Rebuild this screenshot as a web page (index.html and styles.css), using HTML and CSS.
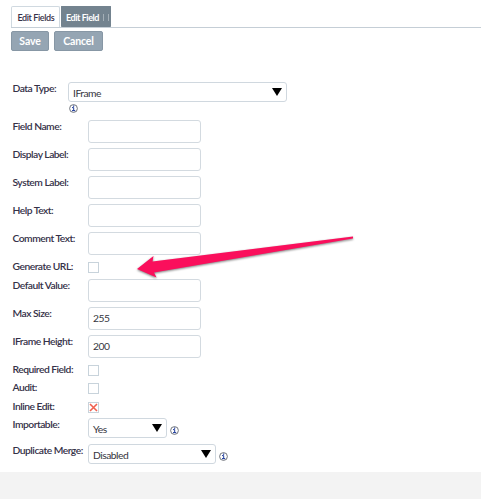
FILE: index.html
```html
<!DOCTYPE html>
<html lang="en">
<head>
<meta charset="utf-8">
<title>Edit Field</title>
<link rel="stylesheet" href="styles.css">
</head>
<body>
<svg class="defs" width="0" height="0">
  <symbol id="info" viewBox="0 0 9 9"><circle cx="4.5" cy="4.5" r="3.9" fill="#fff" stroke="#62666e" stroke-width=".9"/><path d="M3 3.6H4.7V6.6M3 6.6H6.2" fill="none" stroke="#1c3a9a" stroke-width="1"/><path d="M4 1.6H5.2V2.7H4Z" fill="#1c3a9a"/></symbol>
  <symbol id="arrow" viewBox="0 0 10 8"><path d="M0 0H10L5 8Z" fill="#000"/></symbol>
</svg>
<nav class="tabs">
  <span class="tab">Edit Fields</span>
  <span class="tab active">Edit Field<i></i><i></i></span>
</nav>
<div class="actions"><button class="save">Save</button><button class="cancel">Cancel</button></div>
<main>
  <div class="type">
    <label>Data Type:</label>
    <div><div class="select wide">IFrame<svg><use href="#arrow"/></svg></div><svg class="info"><use href="#info"/></svg></div>
  </div>
  <div class="row"><label>Field Name:</label><input></div>
  <div class="row"><label>Display Label:</label><input></div>
  <div class="row"><label>System Label:</label><input></div>
  <div class="row"><label>Help Text:</label><input></div>
  <div class="row"><label>Comment Text:</label><input></div>
  <div class="row r19"><label>Generate URL:</label><span class="check"></span></div>
  <div class="row"><label>Default Value:</label><input></div>
  <div class="row"><label>Max Size:</label><input value="255"></div>
  <div class="row"><label>IFrame Height:</label><input value="200"></div>
  <div class="row r18"><label>Required Field:</label><span class="check"></span></div>
  <div class="row r19"><label>Audit:</label><span class="check"></span></div>
  <div class="row r18"><label>Inline Edit:</label><span class="check"><svg width="9" height="9"><path d="M1 1L8 8M8 1L1 8" stroke="#f0604f" stroke-width="1.6"/></svg></span></div>
  <div class="row r26"><label>Importable:</label><div class="select yes">Yes<svg><use href="#arrow"/></svg></div><svg class="info"><use href="#info"/></svg></div>
  <div class="row"><label>Duplicate Merge:</label><div class="select merge">Disabled<svg><use href="#arrow"/></svg></div><svg class="info"><use href="#info"/></svg></div>
</main>
<footer></footer>
<svg class="pointer" width="240" height="60" viewBox="130 225 240 60"><path d="M137 269L153.500 256L152.500 261.500L353 236.500V238.500L154 272.500L156.500 277.500Z" fill="#fa0f5c"/></svg>
</body>
</html>
```
FILE: styles.css
```css
* { box-sizing: border-box; }
body { margin: 0; width: 481px; height: 499px; overflow: hidden; background: #fff; display: flex; flex-direction: column; font: 10px/14px Lato, sans-serif; color: #353148; }
.defs { position: absolute; }
.tabs { display: flex; height: 28px; margin-left: 11px; padding-top: 6px; border-bottom: 1px solid #c5ced6; flex: none; }
.tab { width: 49px; height: 21px; border: 1px solid #d0d9e0; border-bottom: 0; border-radius: 2px 2px 0 0; padding-left: 5.5px; font-size: 9px; letter-spacing: -.4px; line-height: 21px; font-weight: 600; white-space: nowrap; }
.tab.active { width: 50px; margin-left: 1px; padding-left: 4px; background: #73838f; border-color: #73838f; color: #fff; font-weight: 700; letter-spacing: -.45px; display: flex; border-radius: 1px; }
.tab i { flex: none; width: 1px; height: 7px; margin: 7px 0 0 4px; background: #a4afb7; }
.actions { display: flex; gap: 5px; padding: 3px 0 0 11px; height: 24px; flex: none; }
button { height: 20px; padding: 0; border: 1px solid #8797a5; border-radius: 2px; background: #95a5b3; color: #fff; font: 700 10.5px/18px Lato, sans-serif; letter-spacing: -.15px; }
.save { width: 38px; }
.cancel { width: 49px; }
main { height: 420px; padding: 30px 0 0 12px; flex: none; }
.type { display: flex; height: 38px; }
.type label { width: 56px; }
.type .info { margin: 2px 0 0 1px; }
label { width: 76px; flex: none; padding-left: .5px; font-size: 10.3px; line-height: 13px; font-weight: 600; letter-spacing: -.5px; white-space: nowrap; }
.row { display: flex; height: 28px; align-items: flex-start; }
.r18 { height: 18px; }
.r19 { height: 19px; }
.r26 { height: 26px; }
input { width: 113px; height: 23px; margin: 0; padding: 0 4px 2px; border: 1px solid #d3dae0; border-radius: 3px; outline: 0; font: 10.3px/19px Lato, sans-serif; letter-spacing: -.5px; color: #353540; }
.check { width: 11px; height: 11px; margin-top: 2px; border: 1px solid #c8d3db; display: flex; align-items: center; justify-content: center; }
.check svg { flex: none; }
.select { display: flex; justify-content: space-between; align-items: center; height: 20px; padding: 2px 4px 0; border: 1px solid #d0d8df; border-radius: 3px; font-size: 10.3px; letter-spacing: -.5px; color: #353540; }
.select svg { width: 10px; height: 8px; margin-top: -3px; }
.wide { width: 219px; }
.yes { width: 79px; }
.merge { width: 128px; }
.info { display: block; width: 9px; height: 9px; margin: 8px 0 0 3px; }
footer { flex: 1; background: #f3f3f3; }
.pointer { position: absolute; left: 130px; top: 225px; filter: drop-shadow(.5px 1.5px 1px rgba(0,0,0,.5)); }
```
